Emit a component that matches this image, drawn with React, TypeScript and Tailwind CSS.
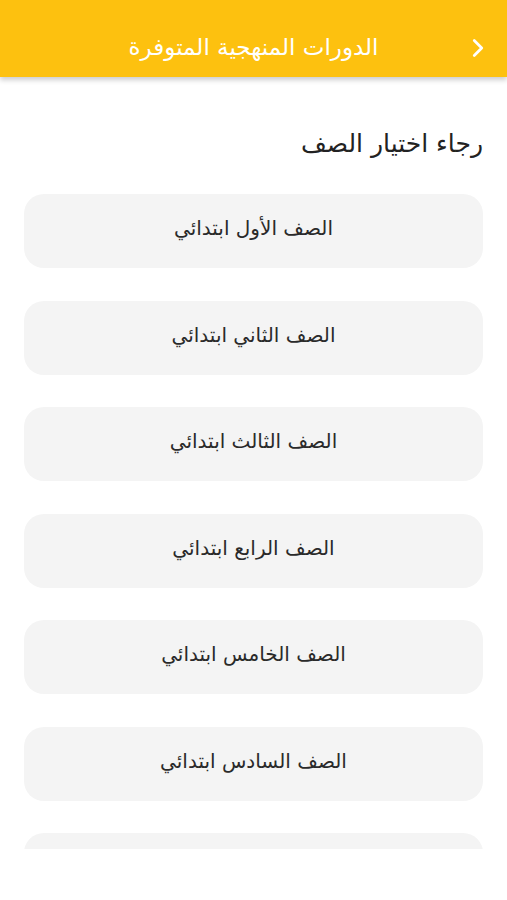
import { ChevronRight } from "lucide-react";

const grades = [
  "الصف الأول ابتدائي",
  "الصف الثاني ابتدائي",
  "الصف الثالث ابتدائي",
  "الصف الرابع ابتدائي",
  "الصف الخامس ابتدائي",
  "الصف السادس ابتدائي",
];

export default function App() {
  return (
    <div
      dir="rtl"
      className="w-[507px] h-[900px] bg-white flex flex-col overflow-hidden"
      style={{ fontFamily: '"DejaVu Sans", sans-serif' }}
    >
      {/* Header */}
      <div className="relative z-10 h-[77px] bg-[#fdc10f] shadow-[0_3px_5px_rgba(0,0,0,0.2)] flex items-center justify-center pt-[18px] shrink-0">
        <h1 className="text-[23px] text-white">الدورات المنهجية المتوفرة</h1>
        <ChevronRight
          size={30}
          strokeWidth={2.2}
          className="absolute left-[463px] top-[33px] text-white"
        />
      </div>

      {/* Content */}
      <div className="h-[772px] overflow-hidden pl-[25px] pr-[24px] pt-[50px]">
        <p className="text-[25px] text-[#222] leading-[34px]">رجاء اختيار الصف</p>
        <div className="mt-[33px] flex flex-col gap-[32.5px]">
          {grades.map((g) => (
            <button
              key={g}
              className="h-[74px] w-[459px] rounded-[20px] bg-[#f4f4f4] flex items-center justify-center pb-[6px] text-[20px] text-[#2a2a2a] shrink-0"
            >
              {g}
            </button>
          ))}
          {/* next row, scrolled off below */}
          <div className="h-[74px] w-[459px] rounded-[20px] bg-[#f4f4f4] shrink-0" />
        </div>
      </div>
    </div>
  );
}
